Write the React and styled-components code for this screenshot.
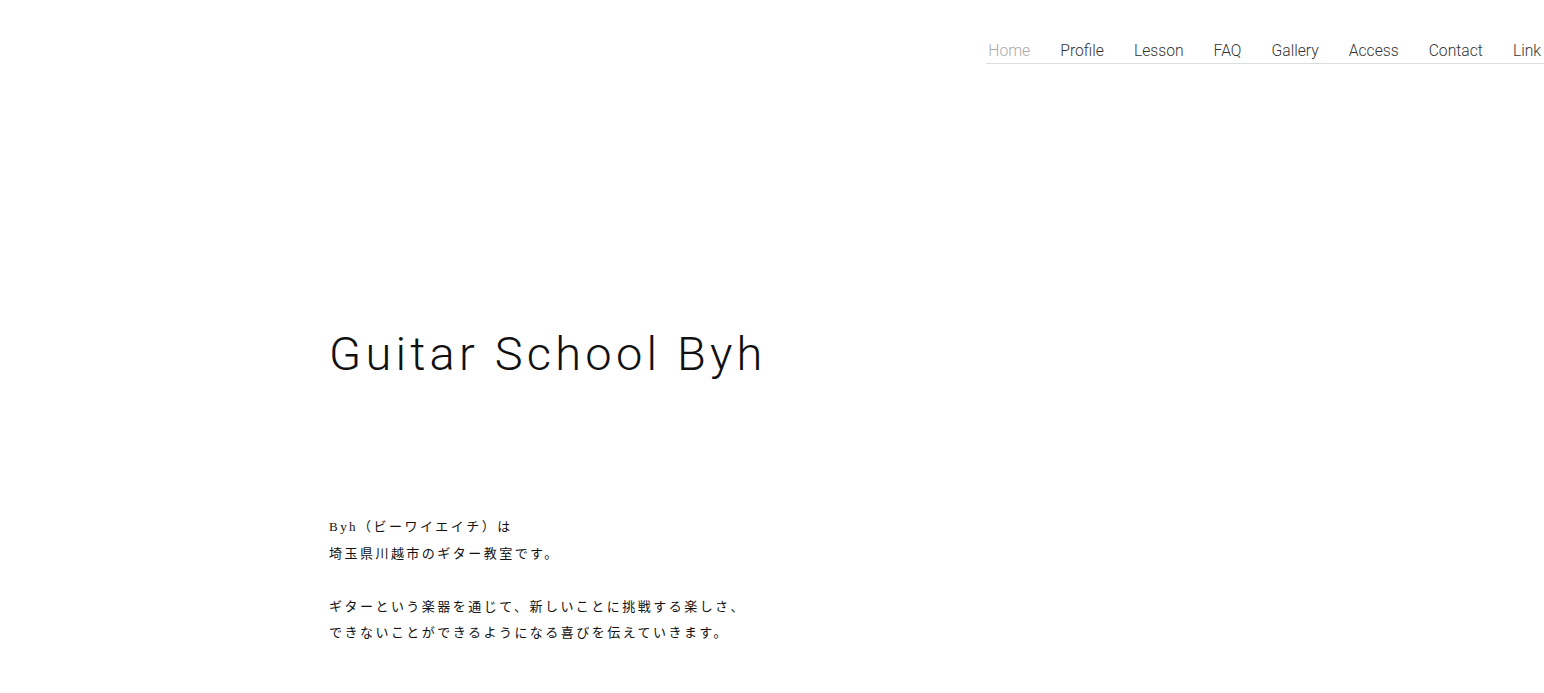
import React from "react";
import styled, { createGlobalStyle } from "styled-components";

const GlobalStyle = createGlobalStyle`
  html, body {
    margin: 0;
    padding: 0;
    background: #fff;
  }
  body {
    font-family: Roboto, "Noto Sans", sans-serif;
    color: #111;
  }
`;

const Page = styled.div`
  width: 100%;
  min-height: 693px;
`;

const Header = styled.header`
  display: flex;
  justify-content: flex-end;
  padding-top: 40px;
`;

const NavList = styled.ul`
  display: flex;
  gap: 30px;
  list-style: none;
  margin: 0;
  padding: 0 3px 1px 2px;
  border-bottom: 1px solid #ddd;
`;

const NavItem = styled.li`
  font-size: 15.7px;
  font-weight: 300;
  line-height: 22px;
  color: ${(p) => (p.$active ? "#aaa" : "#333")};
  cursor: pointer;
`;

const Main = styled.main`
  max-width: 886px;
  margin: 0 auto;
  padding-top: 266px;
`;

const Title = styled.h1`
  margin: 0;
  font-size: 47px;
  font-weight: 300;
  letter-spacing: 0.09em;
  line-height: 1;
  color: #111;
`;

const Lead = styled.div`
  margin-top: 137px;
  font-family: "Liberation Serif", "Noto Sans CJK JP", serif;
  font-size: 13px;
  letter-spacing: 0.19em;
  line-height: 26.5px;
  color: #111;
`;

const Para = styled.p`
  margin: 0 0 26.5px;
`;

const navItems = ["Home", "Profile", "Lesson", "FAQ", "Gallery", "Access", "Contact", "Link"];

export default function App() {
  return (
    <Page>
      <GlobalStyle />
      <Header>
        <NavList>
          {navItems.map((n, i) => (
            <NavItem key={n} $active={i === 0}>{n}</NavItem>
          ))}
        </NavList>
      </Header>
      <Main>
        <Title>Guitar School Byh</Title>
        <Lead>
          <Para>
            Byh（ビーワイエイチ）は<br />
            埼玉県川越市のギター教室です。
          </Para>
          <Para>
            ギターという楽器を通じて、新しいことに挑戦する楽しさ、<br />
            できないことができるようになる喜びを伝えていきます。
          </Para>
        </Lead>
      </Main>
    </Page>
  );
}
